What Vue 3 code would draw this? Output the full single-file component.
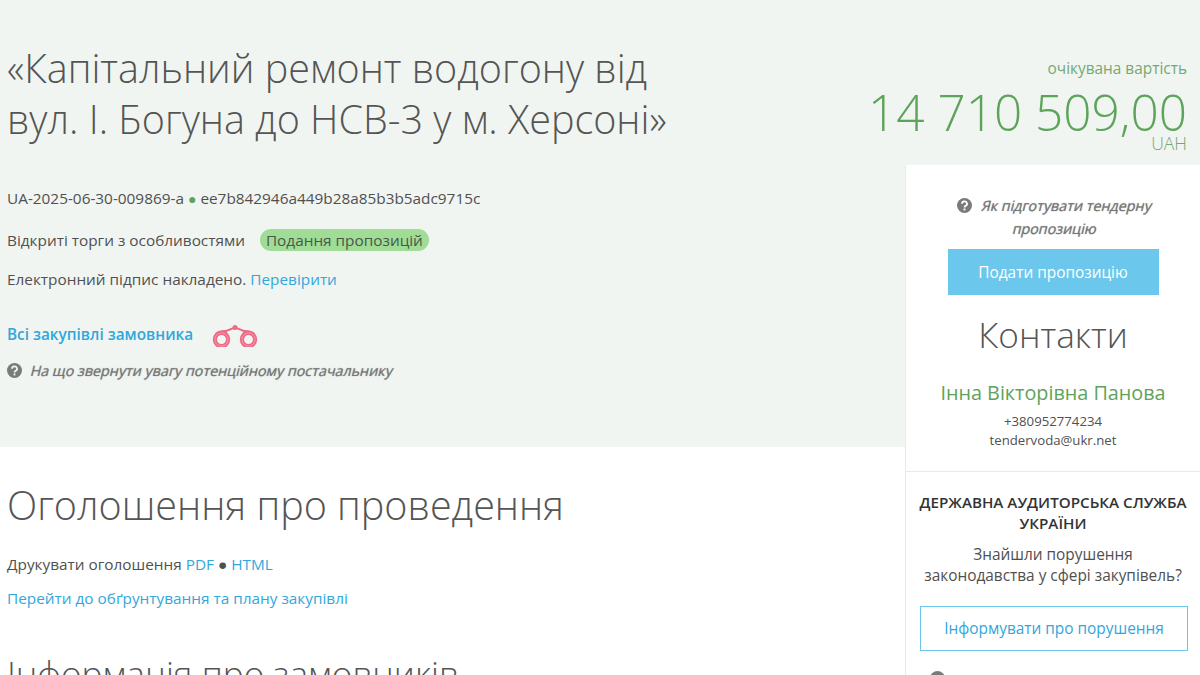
<script setup>
</script>

<template>
  <div class="page">
    <header class="top">
      <h1 class="title">«Капітальний ремонт водогону від<br>вул. І. Богуна до НСВ-3 у м. Херсоні»</h1>
      <div class="price">
        <div class="price-label">очікувана вартість</div>
        <div class="price-value">14 710 509,00</div>
        <div class="price-cur">UAH</div>
      </div>
    </header>
    <main class="left">
      <section class="info">
        <p class="line id-line">UA-2025-06-30-009869-a <span class="dot">●</span> ee7b842946a449b28a85b3b5adc9715c</p>
        <p class="line type-line">Відкриті торги з особливостями <span class="badge">Подання пропозицій</span></p>
        <p class="line sign-line">Електронний підпис накладено. <a class="link">Перевірити</a></p>
        <div class="buyer">
          <a class="link strong">Всі закупівлі замовника</a>
          <svg class="binoculars" width="48" height="26" viewBox="0 -3 48 26" fill="none">
            <g stroke="#ee6a85">
              <circle cx="9.500" cy="15.500" r="6.600" stroke-width="4.200" />
              <circle cx="36.500" cy="15.500" r="6.600" stroke-width="4.200" />
              <path d="M3.500 10 Q8 6.500 14 7 L23 3.500 L32 7 Q38 6.500 42.500 10" stroke-width="2" />
              <path d="M13 7 L15.500 12 M33 7 L30.500 12" stroke-width="2.200" />
            </g>
            <g stroke="#f6a3b4" stroke-width=".8">
              <circle cx="9.500" cy="15.500" r="6.600" />
              <circle cx="36.500" cy="15.500" r="6.600" />
            </g>
            <circle cx="23" cy="3.500" r="2.500" fill="#ee6a85" />
          </svg>
        </div>
        <p class="hint"><svg class="q" width="15" height="15" viewBox="0 0 16 16"><circle cx="8" cy="8" r="8" fill="#7a7a7a"/><path d="M5.300 6.100a2.700 2.500 0 1 1 4 2.200c-.9.500-1.300.9-1.300 1.700" fill="none" stroke="#f0f5f2" stroke-width="1.900"/><rect x="7" y="11.200" width="2" height="2" fill="#f0f5f2"/></svg><span class="slant">На що звернути увагу потенційному постачальнику</span></p>
      </section>
      <section class="notice">
        <h2 class="h2">Оголошення про проведення</h2>
        <p class="print">Друкувати оголошення <a class="link">PDF</a> ● <a class="link">HTML</a></p>
        <p class="plan"><a class="link">Перейти до обґрунтування та плану закупівлі</a></p>
        <h2 class="h3">Інформація про замовників</h2>
      </section>
    </main>
    <aside class="side">
      <div class="side-top">
        <p class="side-hint"><svg class="q" width="15" height="15" viewBox="0 0 16 16"><circle cx="8" cy="8" r="8" fill="#7a7a7a"/><path d="M5.300 6.100a2.700 2.500 0 1 1 4 2.200c-.9.500-1.300.9-1.300 1.700" fill="none" stroke="#fff" stroke-width="1.900"/><rect x="7" y="11.200" width="2" height="2" fill="#fff"/></svg><span class="slant">Як підготувати тендерну</span><br><span class="slant">пропозицію</span></p>
        <button class="submit">Подати пропозицію</button>
        <h3 class="contacts">Контакти</h3>
        <div class="person">Інна Вікторівна Панова</div>
        <div class="small">+380952774234</div>
        <div class="small">tendervoda@ukr.net</div>
      </div>
      <div class="audit">
        <div class="audit-title">ДЕРЖАВНА АУДИТОРСЬКА СЛУЖБА УКРАЇНИ</div>
        <p class="audit-text">Знайшли порушення<br>законодавства у сфері закупівель?</p>
        <button class="report">Інформувати про порушення</button>
        <svg class="q next" width="15" height="15" viewBox="0 0 16 16"><circle cx="8" cy="8" r="8" fill="#7a7a7a"/></svg>
      </div>
    </aside>
  </div>
</template>

<style scoped>
.page {
  width: 1200px;
  height: 675px;
  overflow: hidden;
  display: grid;
  grid-template-columns: 905px 295px;
  grid-template-rows: 165px 510px;
  font-family: "Open Sans", sans-serif;
  font-size: 15.350px;
  color: #505050;
  background: #fff;
}
p { margin: 0; }
.link { color: #31a7dc; text-decoration: none; }
.top {
  grid-column: 1 / 3;
  background: #f0f5f2;
  display: flex;
  justify-content: space-between;
  padding: 43px 13px 0 7px;
}
.title {
  margin: 0;
  font-size: 39.500px;
  font-weight: 300;
  line-height: 51px;
  color: #555;
}
.price { text-align: right; color: #5ea35a; font-weight: 300; }
.price-label { font-size: 15.400px; font-weight: 400; line-height: 20px; margin-top: 16px; color: #76a96f; }
.price-value { font-size: 49.500px; line-height: 42px; margin-top: 12px; }
.price-cur { font-size: 17.600px; line-height: 20px; color: #78a578; }
.info {
  height: 282px;
  background: #f0f5f2;
  padding: 22px 7px 0;
  box-sizing: border-box;
}
.line { line-height: 20px; }
.id-line { padding-top: 1px; margin-bottom: -1px; }
.dot { color: #5ea35a; font-size: 14px; line-height: 1; }
.type-line { margin-top: 22px; }
.badge {
  display: inline-block;
  margin-left: 11px;
  padding: 0 6px;
  line-height: 22px;
  border-radius: 11px;
  background: #a0dc96;
  color: #47584a;
}
.sign-line { margin-top: 18px; }
.buyer { display: flex; align-items: center; margin-top: 32px; height: 26px; }
.strong { font-weight: 600; }
.binoculars { margin-left: 19px; }
.hint {
  margin-top: 14px;
  display: flex;
  align-items: center;
  color: #777;
  font-size: 14.300px;
  text-shadow: 0 0 1px #888;
}
.slant { display: inline-block; transform: skewX(-14deg); }
.hint .q { margin-right: 9px; }
.notice { padding: 32px 7px 0; }
.h2 {
  margin: 0;
  font-size: 39.500px;
  font-weight: 300;
  line-height: 52px;
  color: #555;
}
.h3 {
  margin: 42px 0 0;
  font-size: 35.200px;
  font-weight: 300;
  line-height: 46px;
  color: #555;
}
.print { margin-top: 23px; line-height: 20px; }
.plan { margin-top: 14px; line-height: 20px; }
.side {
  border-left: 1px solid #e8ece9;
  background: #fff;
  box-sizing: border-box;
  overflow: hidden;
}
.side-top {
  height: 307px;
  border-bottom: 1px solid #e8ece9;
  box-sizing: border-box;
  display: flex;
  flex-direction: column;
  align-items: center;
  padding-top: 29px;
}
.side-hint {
  width: 244px;
  padding-left: 4px;
  box-sizing: border-box;
  text-align: center;
  line-height: 23px;
  color: #777;
  font-size: 14.300px;
  text-shadow: 0 0 1px #888;
  height: 55px;
}
.side-hint .q { vertical-align: -2px; margin-right: 10px; }
.submit {
  width: 211px;
  height: 46px;
  border: 0;
  background: #6cc7ec;
  color: #fff;
  font: 400 15.400px "Open Sans", sans-serif;
}
.contacts {
  margin: 16px 0 0;
  font-size: 35.200px;
  font-weight: 300;
  line-height: 46px;
  color: #555;
}
.person {
  margin-top: 23px;
  font-size: 19.800px;
  line-height: 26px;
  color: #5ea35a;
}
.small { font-size: 13.200px; line-height: 19px; }
.person + .small { margin-top: 6px; }
.audit { padding: 20px 8px 0; text-align: center; }
.audit-title { font-size: 15.200px; font-weight: 600; line-height: 21px; color: #333; }
.audit-text { margin: 10px 0 0; font-size: 15.400px; line-height: 21px; }
.report {
  display: block;
  width: 268px;
  height: 45px;
  margin: 20px 0 0 6px;
  border: 1px solid #6cc7ec;
  background: #fff;
  color: #31a7dc;
  font: 400 15.400px "Open Sans", sans-serif;
}
.next { display: block; margin: 20px 0 0 16px; }
</style>
